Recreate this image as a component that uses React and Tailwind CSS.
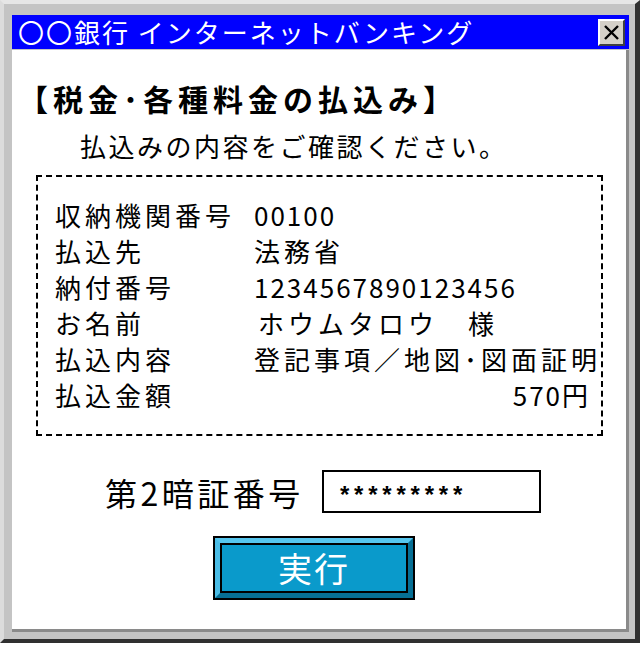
import React from "react";

const font = { fontFamily: '"Noto Sans CJK JP", "Noto Sans", sans-serif' };

const rows = [
  { label: "収納機関番号", value: "00100", digits: true },
  { label: "払込先", value: "法務省" },
  { label: "納付番号", value: "1234567890123456", digits: true },
  { label: "お名前", value: "ホウムタロウ　様", indent: true },
  { label: "払込内容", value: "登記事項／地図･図面証明" },
  { label: "払込金額", value: "570円", right: true, digits: true },
];

function CloseButton() {
  return (
    <div className="w-[27px] h-[27px] bg-[#d4d0c8] border-t-2 border-l-2 border-white border-r-2 border-b-2 border-r-[#404040] border-b-[#404040] flex items-center justify-center">
      <svg width="17" height="17" viewBox="0 0 17 17">
        <path d="M2 2 L15 15 M15 2 L2 15" stroke="#000" strokeWidth="2.4" />
      </svg>
    </div>
  );
}

export default function App() {
  return (
    <div className="w-[640px] h-[646px] bg-white" style={font}>
      <div className="w-[640px] h-[643px] bg-[#c4c4c4] border-t-[4px] border-l-[4px] border-t-[#e6e6e6] border-l-[#dcdcdc] border-r-[5px] border-b-[4px] border-r-[#303030] border-b-[#303030] pt-[11px] pl-[8px] pr-[6px] pb-[7px] flex flex-col">
        {/* title bar */}
        <div className="h-[34px] bg-[#0000ff] flex items-center justify-between pl-[6px] pr-[4px]">
          <span className="text-white text-[26px] leading-none tracking-[2px]">〇〇銀行 インターネットバンキング</span>
          <CloseButton />
        </div>
        {/* content */}
        <div className="flex-1 mt-[1px] bg-white border-r-[3px] border-b-[3px] border-r-[#8a8a8a] border-b-[#8a8a8a] flex flex-col">
          <h1 className="mt-[28px] ml-[6px] text-[30px] leading-[40px] font-bold text-black tracking-[5px]">【税金･各種料金の払込み】</h1>
          <p className="mt-[11px] ml-[68px] text-[26px] leading-[34px] text-black tracking-[2.5px]">払込みの内容をご確認ください。</p>
          <div className="mt-[12px] ml-[24px] w-[567px] h-[261px] border-2 border-dashed border-black pt-[20px] pl-[17px] pr-[10px]">
            {rows.map((r) => (
              <div key={r.label} className="flex h-[36px] items-center text-[26px] leading-none text-black">
                <span className="w-[199px] shrink-0 tracking-[4px]">{r.label}</span>
                <span className={`flex-1 whitespace-nowrap ${r.digits ? "tracking-[2px]" : "tracking-[4px]"} ${r.right ? "text-right pr-[1px]" : ""} ${r.indent ? "pl-[4px]" : ""}`}>{r.value}</span>
              </div>
            ))}
          </div>
          <div className="mt-[34px] flex items-center justify-center gap-[18px] pl-[8px]">
            <span className="text-[32px] leading-none tracking-[3.5px] text-black">第2暗証番号</span>
            <div className="w-[219px] h-[43px] border-2 border-black flex items-center pl-[16px]">
              <span className="text-[24px] leading-none tracking-[4.8px] text-black font-bold pt-[6px]" style={{ fontFamily: '"Liberation Sans", sans-serif' }}>*********</span>
            </div>
          </div>
          <div className="mt-[23px] flex justify-center pr-[10px]">
            <button className="w-[202px] h-[64px] border-2 border-black bg-[#0a9acb] p-0">
              <div className="w-full h-full border-t-[5px] border-l-[5px] border-t-[#56c6ee] border-l-[#4cbde6] border-r-[5px] border-b-[5px] border-r-[#066f95] border-b-[#066f95] flex items-center justify-center">
                <div className="w-full h-full border-2 border-black flex items-center justify-center text-white text-[34px] leading-none tracking-[2px]">実行</div>
              </div>
            </button>
          </div>
        </div>
      </div>
    </div>
  );
}
